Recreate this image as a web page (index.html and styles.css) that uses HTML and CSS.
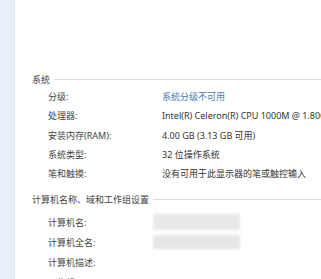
FILE: index.html
```html
<!DOCTYPE html>
<html>
<head>
<meta charset="utf-8">
<link rel="stylesheet" href="styles.css">
</head>
<body>
<div class="page">
  <div class="side"></div>
  <div class="main">
    <div class="group">
      <div class="head"><span>系统</span><i></i></div>
      <div class="row"><span class="k">分级:</span><span class="v link">系统分级不可用</span></div>
      <div class="row"><span class="k">处理器:</span><span class="v">Intel(R) Celeron(R) CPU 1000M @ 1.80GHz</span></div>
      <div class="row"><span class="k">安装内存(RAM):</span><span class="v">4.00 GB (3.13 GB 可用)</span></div>
      <div class="row"><span class="k">系统类型:</span><span class="v">32 位操作系统</span></div>
      <div class="row"><span class="k">笔和触摸:</span><span class="v">没有可用于此显示器的笔或触控输入</span></div>
    </div>
    <div class="group g2">
      <div class="head"><span>计算机名称、域和工作组设置</span><i></i></div>
      <div class="blk">
        <div class="keys">
          <div class="row2"><span class="k">计算机名:</span></div>
          <div class="row2"><span class="k">计算机全名:</span></div>
          <div class="row2"><span class="k">计算机描述:</span></div>
          <div class="row2"><span class="k">工作组:</span></div>
        </div>
        <div class="mask"><div class="m1"></div><div class="m2"></div></div>
      </div>
    </div>
  </div>
</div>
</body>
</html>
```
FILE: styles.css
```css
html, body { margin: 0; padding: 0; background: #fff; }
body { font-family: "Noto Sans", "Noto Sans CJK SC", sans-serif; font-size: 9px; color: #3a3a3a; overflow: hidden; }
.page { display: flex; height: 279px; }
.side { width: 14px; flex: none; background: #e9eff8; border-right: 1px solid #dfe6f0; }
.main { flex: 1; padding-left: 17px; padding-top: 71px; min-width: 0; overflow: hidden; }
.head { display: flex; align-items: center; height: 16px; }
.head span { white-space: nowrap; color: #444; }
.head i { flex: 1; height: 1px; background: #d9dee6; margin-left: 4px; }
.row { display: flex; height: 19.3px; align-items: center; white-space: nowrap; }
.row:first-of-type { margin-top: 6px; }
.k { width: 114px; flex: none; padding-left: 16px; color: #444; }
.v { color: #333; }
.link { color: #4a7ab8; }
.g2 { margin-top: 8px; }
.blk { display: flex; }
.keys { flex: none; margin-top: 5px; }
.row2 { height: 20px; display: flex; align-items: center; white-space: nowrap; }
.mask { margin-left: -9px; margin-top: 7px; width: 87px; filter: blur(1.5px); }
.m1 { height: 16px; background: #e8e8e8; }
.m2 { height: 14px; margin-top: 5px; background: #e6e6e6; }
```
